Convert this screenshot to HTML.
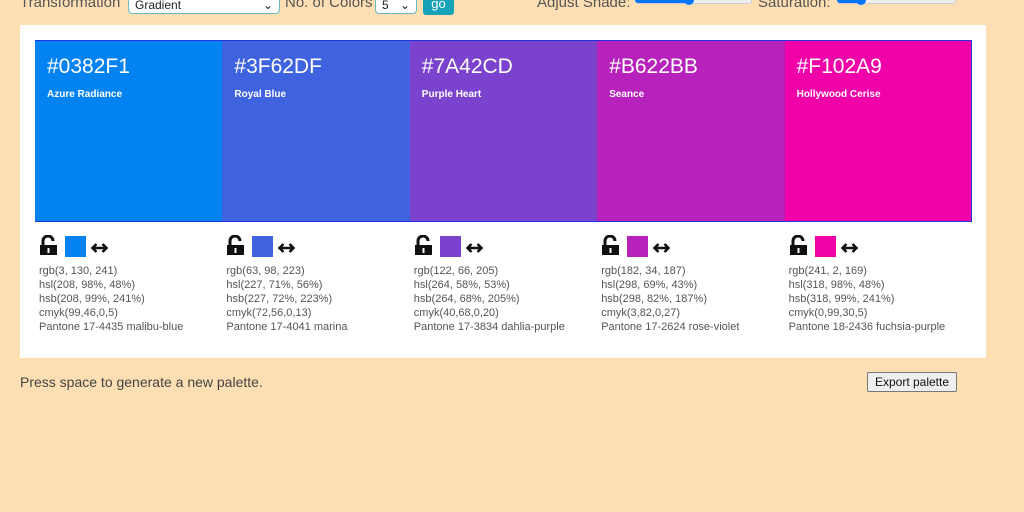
<!DOCTYPE html><html><head><style>
body{margin:0;background:#fddfb3;font-family:"Liberation Sans",sans-serif;width:1024px;height:512px;overflow:hidden;position:relative;color:#444}
.abs{position:absolute}
.lbl{font-size:15px;color:#555;top:-6px}
.sel{background:#fff;border:1px solid #6bb;border-radius:4px;height:20px;top:-6px;font-size:12px;color:#222;box-sizing:border-box;padding:3px 6px}
.box{left:20px;top:25px;width:966px;height:333px;background:#fff}
.sw{top:40px;height:182px;width:187.4px;box-sizing:border-box;border-top:1px solid #2233dd;border-bottom:1px solid #2233dd;color:#fff}
.sw h{display:block;position:absolute;left:12px;top:14px;font-size:21px}
.sw b{position:absolute;left:12px;top:48px;font-size:10px}
.info{top:233px;width:187px;font-size:11px;line-height:14px;color:#555}
.sq{position:absolute;left:26px;top:3px;width:21px;height:21px}
.txt{position:absolute;left:0;top:31px;white-space:nowrap}
</style></head><body>
<div class="abs lbl" style="left:20px">Transformation</div>
<div class="abs sel" style="left:128px;width:152px">Gradient<span style="float:right">⌄</span></div>
<div class="abs lbl" style="left:285px">No. of Colors</div>
<div class="abs sel" style="left:375px;width:42px">5<span style="float:right">⌄</span></div>
<div class="abs" style="left:423px;top:-6px;width:31px;height:21px;background:#17a2b8;border-radius:3px;color:#fff;font-size:13px;text-align:center;line-height:20px">go</div>
<div class="abs lbl" style="left:537px">Adjust Shade:</div>
<div class="abs" style="left:635px;top:-4px;width:115px;height:6px;background:#eee;border:1px solid #ccc;border-radius:3px"></div>
<div class="abs" style="left:635px;top:-4px;width:55px;height:7px;background:#0075ff;border-radius:3px"></div>
<div class="abs" style="left:684px;top:-5px;width:10px;height:10px;background:#0075ff;border-radius:50%"></div>
<div class="abs lbl" style="left:758px">Saturation:</div>
<div class="abs" style="left:837px;top:-4px;width:117px;height:6px;background:#eee;border:1px solid #ccc;border-radius:3px"></div>
<div class="abs" style="left:837px;top:-4px;width:25px;height:7px;background:#0075ff;border-radius:3px"></div>
<div class="abs" style="left:856px;top:-5px;width:10px;height:10px;background:#0075ff;border-radius:50%"></div>
<div class="abs box"></div>
<div class="abs sw" style="left:35px;background:#0382f1"><h>#0382F1</h><b>Azure Radiance</b></div>
<div class="abs sw" style="left:222.4px;background:#3f62df"><h>#3F62DF</h><b>Royal Blue</b></div>
<div class="abs sw" style="left:409.8px;background:#7a42cd"><h>#7A42CD</h><b>Purple Heart</b></div>
<div class="abs sw" style="left:597.2px;background:#b622bb"><h>#B622BB</h><b>Seance</b></div>
<div class="abs sw" style="left:784.6px;background:#f102a9;border-right:1px solid #2233dd"><h>#F102A9</h><b>Hollywood Cerise</b></div>
<svg width="0" height="0" style="position:absolute"><defs>
<g id="ic"><path d="M4 10V6a5 5 0 0 1 10 0" fill="none" stroke="#111" stroke-width="3"/><rect x="1" y="10" width="17" height="10" fill="#111"/><rect x="8.5" y="13" width="2" height="5" fill="#fff"/>
<path d="M54 13h13M57.5 9l-4 4 4 4M63.5 9l4 4-4 4" fill="none" stroke="#111" stroke-width="2.5"/></g></defs></svg>
<div class="abs info" style="left:39px"><svg class="abs" style="left:0;top:2px" width="72" height="24"><use href="#ic"/></svg><div class="sq" style="background:#0382f1"></div><div class="txt">rgb(3, 130, 241)<br>hsl(208, 98%, 48%)<br>hsb(208, 99%, 241%)<br>cmyk(99,46,0,5)<br>Pantone 17-4435 malibu-blue</div></div>
<div class="abs info" style="left:226.4px"><svg class="abs" style="left:0;top:2px" width="72" height="24"><use href="#ic"/></svg><div class="sq" style="background:#3f62df"></div><div class="txt">rgb(63, 98, 223)<br>hsl(227, 71%, 56%)<br>hsb(227, 72%, 223%)<br>cmyk(72,56,0,13)<br>Pantone 17-4041 marina</div></div>
<div class="abs info" style="left:413.8px"><svg class="abs" style="left:0;top:2px" width="72" height="24"><use href="#ic"/></svg><div class="sq" style="background:#7a42cd"></div><div class="txt">rgb(122, 66, 205)<br>hsl(264, 58%, 53%)<br>hsb(264, 68%, 205%)<br>cmyk(40,68,0,20)<br>Pantone 17-3834 dahlia-purple</div></div>
<div class="abs info" style="left:601.2px"><svg class="abs" style="left:0;top:2px" width="72" height="24"><use href="#ic"/></svg><div class="sq" style="background:#b622bb"></div><div class="txt">rgb(182, 34, 187)<br>hsl(298, 69%, 43%)<br>hsb(298, 82%, 187%)<br>cmyk(3,82,0,27)<br>Pantone 17-2624 rose-violet</div></div>
<div class="abs info" style="left:788.6px"><svg class="abs" style="left:0;top:2px" width="72" height="24"><use href="#ic"/></svg><div class="sq" style="background:#f102a9"></div><div class="txt">rgb(241, 2, 169)<br>hsl(318, 98%, 48%)<br>hsb(318, 99%, 241%)<br>cmyk(0,99,30,5)<br>Pantone 18-2436 fuchsia-purple</div></div>
<div class="abs" style="left:20px;top:374px;font-size:14px;color:#444">Press space to generate a new palette.</div>
<div class="abs" style="left:867px;top:372px;width:88px;height:18px;background:#efefef;border:1px solid #777;border-radius:2px;font-size:12px;color:#111;text-align:center;line-height:18px">Export palette</div>
</body></html>
